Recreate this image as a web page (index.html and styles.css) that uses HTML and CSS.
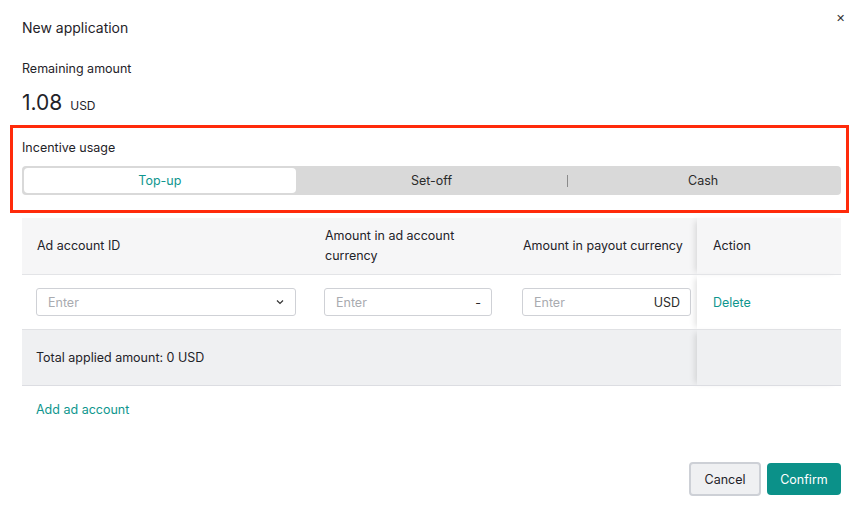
FILE: index.html
```html
<!DOCTYPE html>
<html lang="en">
<head>
    <meta charset="UTF-8">
    <meta name="viewport" content="width=device-width, initial-scale=1.0">
    <title>New application</title>
    <link rel="stylesheet" href="styles.css">
</head>
<body>
    <div class="dialog">
        <div class="dialog-head">
            <h1>New application</h1>
            <span class="close">&#x2715;</span>
        </div>

        <p class="label">Remaining amount</p>
        <p class="amount">1.08 <span>USD</span></p>

        <div class="usage">
            <p class="label">Incentive usage</p>
            <div class="segment">
                <div class="seg active">Top-up</div>
                <div class="seg">Set-off</div>
                <div class="seg divided">Cash</div>
            </div>
        </div>

        <table class="grid">
            <colgroup>
                <col style="width:288px">
                <col style="width:198px">
                <col style="width:189px">
                <col style="width:144px">
            </colgroup>
            <thead>
                <tr>
                    <th>Ad account ID</th>
                    <th>Amount in ad account currency</th>
                    <th>Amount in payout currency</th>
                    <th class="fixed">Action</th>
                </tr>
            </thead>
            <tbody>
                <tr>
                    <td>
                        <div class="field">
                            <span class="ph">Enter</span>
                            <svg width="10" height="10" viewBox="0 0 10 10"><path d="M2 3.5 L5 6.5 L8 3.5" fill="none" stroke="#333" stroke-width="1.2"/></svg>
                        </div>
                    </td>
                    <td class="inset-wide">
                        <div class="field"><span class="ph">Enter</span><span class="suffix">-</span></div>
                    </td>
                    <td class="inset">
                        <div class="field"><span class="ph">Enter</span><span class="suffix">USD</span></div>
                    </td>
                    <td class="fixed"><a class="link" href="#">Delete</a></td>
                </tr>
                <tr class="total">
                    <td colspan="3">Total applied amount: 0 USD</td>
                    <td class="fixed"></td>
                </tr>
            </tbody>
        </table>

        <a class="link add" href="#">Add ad account</a>

        <div class="actions">
            <button class="btn cancel">Cancel</button>
            <button class="btn confirm">Confirm</button>
        </div>
    </div>
</body>
</html>
```

FILE: styles.css
```css
body {
    font-family: Inter, "Noto Sans", sans-serif;
    color: #1f2329;
    background: #fff;
    margin: 0;
    padding: 0;
}
.dialog {
    padding: 0 14px 0 22px;
}
.dialog-head {
    display: flex;
    justify-content: space-between;
    align-items: flex-start;
    padding-top: 18px;
}
.dialog-head h1 {
    font-size: 14px;
    font-weight: 400;
    line-height: 20px;
    margin: 0;
}
.close {
    font-size: 11px;
    color: #333;
    margin-top: -7px;
    margin-right: -4px;
}
.label {
    font-size: 12.5px;
    line-height: 18px;
    margin: 22px 0 0;
}
.amount {
    font-size: 21px;
    line-height: 26px;
    margin: 12px 0 0;
}
.amount span {
    font-size: 12px;
    margin-left: 2px;
}
.usage {
    border: 3px solid #ff2a0a;
    margin: 6px -8px 0 -12px;
    padding: 11px 5px 15px 9px;
}
.usage .label {
    margin: 0;
}
.segment {
    display: flex;
    background: #d9d9d9;
    border-radius: 4px;
    padding: 2px;
    margin-top: 9px;
}
.seg {
    flex: 1;
    text-align: center;
    font-size: 12.5px;
    line-height: 25px;
    color: #2b2b2b;
    border-radius: 4px;
    position: relative;
}
.seg.active {
    background: #fff;
    color: #0f968e;
}
.seg.divided::before {
    content: "";
    position: absolute;
    left: 0;
    top: 7px;
    height: 12px;
    border-left: 1px solid #8a8a8a;
}
.grid {
    border-collapse: collapse;
    table-layout: fixed;
    width: 819px;
    margin-top: 5px;
    font-size: 12.5px;
}
.grid th {
    background: #f6f6f7;
    font-weight: 400;
    text-align: left;
    line-height: 20px;
    height: 56px;
    padding: 0 12px 0 15px;
    border-bottom: 1px solid #e3e4e7;
}
.grid td {
    height: 54px;
    padding: 0 14px;
    border-bottom: 1px solid #e0e1e4;
}
.grid td.inset-wide {
    padding: 0 16px 0 14px;
}
.grid td.inset {
    padding: 0 6px 0 14px;
}
.grid .fixed {
    box-shadow: -5px 0 6px -3px rgba(0, 0, 0, 0.12);
    padding-left: 16px;
}
.field {
    display: flex;
    justify-content: space-between;
    align-items: center;
    height: 26px;
    border: 1px solid #cfd1d6;
    border-radius: 3px;
    padding: 0 10px 0 11px;
}
.ph {
    color: #a9abb0;
}
.suffix {
    color: #2b2b2b;
}
.link {
    color: #0f968e;
    text-decoration: none;
}
.total td {
    background: #eff0f2;
    height: 55px;
    border-bottom: 1px solid #dcdde2;
}
.add {
    display: inline-block;
    margin: 16px 0 0 14px;
    font-size: 12.5px;
}
.actions {
    display: flex;
    justify-content: flex-end;
    gap: 6px;
    margin-top: 45px;
}
.btn {
    font-family: Inter, "Noto Sans", sans-serif;
    font-size: 12.5px;
    border-radius: 4px;
    height: 32px;
}
.cancel {
    background: #eff0f2;
    border: 2px solid #cdd0d6;
    color: #1f2329;
    width: 72px;
    height: 34px;
    margin-top: -1px;
}
.confirm {
    background: #0b9189;
    border: none;
    color: #fff;
    width: 74px;
    height: 32px;
}
```
